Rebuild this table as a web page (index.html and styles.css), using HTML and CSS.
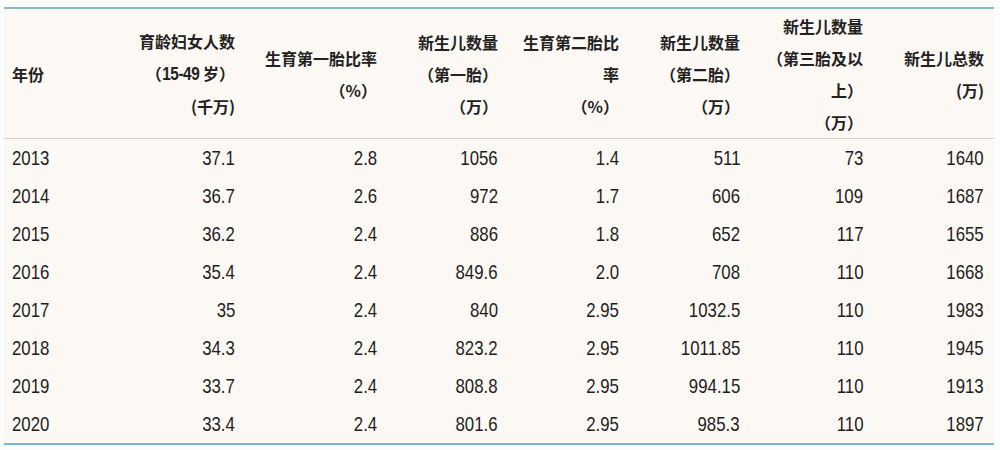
FILE: index.html
```html
<!DOCTYPE html>
<html lang="zh-CN">
<head>
<meta charset="utf-8">
<title>新生儿数量</title>
<link rel="stylesheet" href="styles.css">
</head>
<body>
<div class="page">
<table class="data">
  <colgroup>
    <col class="c1"><col class="c2"><col class="c3"><col class="c4"><col class="c5"><col class="c6"><col class="c7"><col class="c8">
  </colgroup>
  <thead>
    <tr>
      <th class="left">年份</th>
      <th>育龄妇女人数<br>（<span class="num">15-49</span> 岁）<br>(千万)</th>
      <th>生育第一胎比率<br>（%）</th>
      <th>新生儿数量<br>（第一胎）<br>（万）</th>
      <th>生育第二胎比<br>率<br>（%）</th>
      <th>新生儿数量<br>（第二胎）<br>（万）</th>
      <th>新生儿数量<br>（第三胎及以<br>上）<br>（万）</th>
      <th>新生儿总数<br>(万)</th>
    </tr>
  </thead>
  <tbody>
    <tr><td class="left"><span>2013</span></td><td><span>37.1</span></td><td><span>2.8</span></td><td><span>1056</span></td><td><span>1.4</span></td><td><span>511</span></td><td><span>73</span></td><td><span>1640</span></td></tr>
    <tr><td class="left"><span>2014</span></td><td><span>36.7</span></td><td><span>2.6</span></td><td><span>972</span></td><td><span>1.7</span></td><td><span>606</span></td><td><span>109</span></td><td><span>1687</span></td></tr>
    <tr><td class="left"><span>2015</span></td><td><span>36.2</span></td><td><span>2.4</span></td><td><span>886</span></td><td><span>1.8</span></td><td><span>652</span></td><td><span>117</span></td><td><span>1655</span></td></tr>
    <tr><td class="left"><span>2016</span></td><td><span>35.4</span></td><td><span>2.4</span></td><td><span>849.6</span></td><td><span>2.0</span></td><td><span>708</span></td><td><span>110</span></td><td><span>1668</span></td></tr>
    <tr><td class="left"><span>2017</span></td><td><span>35</span></td><td><span>2.4</span></td><td><span>840</span></td><td><span>2.95</span></td><td><span>1032.5</span></td><td><span>110</span></td><td><span>1983</span></td></tr>
    <tr><td class="left"><span>2018</span></td><td><span>34.3</span></td><td><span>2.4</span></td><td><span>823.2</span></td><td><span>2.95</span></td><td><span>1011.85</span></td><td><span>110</span></td><td><span>1945</span></td></tr>
    <tr><td class="left"><span>2019</span></td><td><span>33.7</span></td><td><span>2.4</span></td><td><span>808.8</span></td><td><span>2.95</span></td><td><span>994.15</span></td><td><span>110</span></td><td><span>1913</span></td></tr>
    <tr><td class="left"><span>2020</span></td><td><span>33.4</span></td><td><span>2.4</span></td><td><span>801.6</span></td><td><span>2.95</span></td><td><span>985.3</span></td><td><span>110</span></td><td><span>1897</span></td></tr>
  </tbody>
</table>
</div>
</body>
</html>
```

FILE: styles.css
```css
html, body {
  margin: 0;
  padding: 0;
  background: #fbfdfd;
}

.page {
  padding: 7px 6px 0 4px;
}

.data {
  width: 990px;
  border-collapse: collapse;
  table-layout: fixed;
  background: #fcf8f3;
  border-top: 2px solid #86b9c9;
  border-bottom: 2px solid #72b6d8;
  color: #1e1e1e;
}

.c1 { width: 106px; }
.c2 { width: 135px; }
.c3 { width: 142px; }
.c4 { width: 121px; }
.c5 { width: 121px; }
.c6 { width: 121px; }
.c7 { width: 123px; }
.c8 { width: 121px; }

.data th {
  height: 129px;
  padding: 0 10px 0 8px;
  text-align: right;
  vertical-align: middle;
  font-family: "Noto Sans CJK SC", sans-serif;
  font-weight: 700;
  font-size: 16px;
  line-height: 32px;
  color: #222;
  border-bottom: 1px solid #d3d0cb;
  white-space: nowrap;
}

.data th .num {
  display: inline-block;
  font-family: "Liberation Sans", sans-serif;
  font-size: 18px;
  letter-spacing: -0.5px;
  transform: scaleX(0.85);
  margin: 0 -3px;
}

.data td {
  height: 38px;
  padding: 0 10px 0 8px;
  text-align: right;
  vertical-align: middle;
  font-family: "Liberation Sans", Arial, sans-serif;
  font-size: 21px;
  line-height: 24px;
  white-space: nowrap;
}

.data td span {
  display: inline-block;
  transform: scaleX(0.8);
  transform-origin: right center;
}

.data .left {
  text-align: left;
}

.data td.left span {
  transform-origin: left center;
}
```
